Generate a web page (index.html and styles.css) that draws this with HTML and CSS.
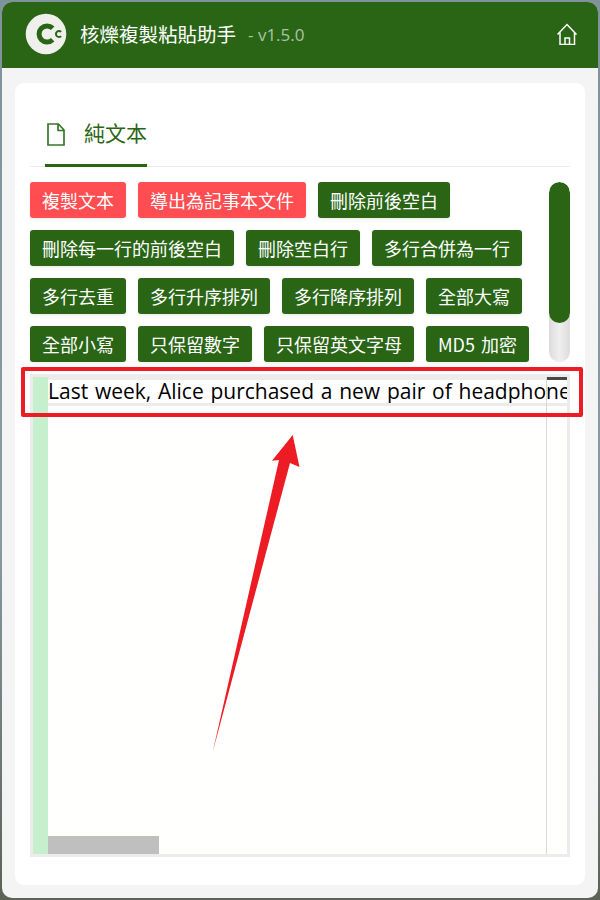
FILE: index.html
```html
<!DOCTYPE html>
<html lang="zh-Hant">
<head>
<meta charset="utf-8">
<title>核爍複製粘貼助手</title>
<link rel="stylesheet" href="styles.css">
</head>
<body>
<div class="window">
  <header class="header">
    <svg class="logo" viewBox="0 0 42 42" width="42" height="42" aria-hidden="true">
      <circle cx="21" cy="21" r="20.3" fill="#efefec"/>
      <path d="M27.7 15.3A8 8 0 1 0 27.7 26.7" fill="none" stroke="#2a6516" stroke-width="5"/>
      <path d="M36.1 18.9A3 3 0 1 0 36.1 23.1" fill="none" stroke="#2a6516" stroke-width="2"/>
    </svg>
    <span class="title">核爍複製粘貼助手</span>
    <span class="version">- v1.5.0</span>
    <svg class="home" viewBox="0 0 22 22" width="22" height="22" aria-hidden="true">
      <path d="M1.5 11.5 11 1.5l9.5 10M4 9.5v12h14.5v-12M9 21.5v-6.5h4.5v6.5" fill="none" stroke="#fff" stroke-width="1.5"/>
    </svg>
  </header>
  <main class="card">
    <div class="tabs">
      <div class="tab">
        <svg class="file" viewBox="0 0 18 23" width="18" height="23" aria-hidden="true">
          <path d="M1 1h10.5L17 7v15H1zM11 1v6.5h6" fill="none" stroke="#38762a" stroke-width="1.7"/>
        </svg>
        <span>純文本</span>
      </div>
    </div>
    <div class="tools">
      <div class="buttons">
        <button class="btn btn-red">複製文本</button>
        <button class="btn btn-red">導出為記事本文件</button>
        <button class="btn">刪除前後空白</button>
        <button class="btn">刪除每一行的前後空白</button>
        <button class="btn">刪除空白行</button>
        <button class="btn">多行合併為一行</button>
        <button class="btn">多行去重</button>
        <button class="btn">多行升序排列</button>
        <button class="btn">多行降序排列</button>
        <button class="btn">全部大寫</button>
        <button class="btn">全部小寫</button>
        <button class="btn">只保留數字</button>
        <button class="btn">只保留英文字母</button>
        <button class="btn">MD5 加密</button>
      </div>
      <div class="scrollbar"><div class="scroll-thumb"></div></div>
    </div>
    <div class="editor">
      <div class="gutter"></div>
      <div class="code">
        <div class="line">Last week, Alice purchased a new pair of headphone</div>
        <div class="hthumb"></div>
        <div class="minimap"><div class="minimap-mark"></div></div>
      </div>
    </div>
  </main>
</div>
<div class="red-frame"></div>
<svg class="arrow" viewBox="0 0 600 900" width="600" height="900" aria-hidden="true">
  <path d="M292.7 435 299.5 467 290 463 212.7 752 279 460 272 460.7Z" fill="#ed1c24"/>
</svg>
</body>
</html>
```
FILE: styles.css
```css
* { box-sizing: border-box; }
html, body { margin: 0; height: 100%; }
body {
  position: relative;
  width: 600px;
  height: 900px;
  overflow: hidden;
  padding: 2px;
  background: linear-gradient(#7f929d 0, #8a9aa3 60%, #5d6257 100%);
  font-family: "Noto Sans CJK TC", "Noto Sans", sans-serif;
}
.window {
  height: 896px;
  display: flex;
  flex-direction: column;
  background: #f4f4f4;
  border-radius: 10px;
  overflow: hidden;
}
.header {
  flex: none;
  height: 66px;
  display: flex;
  align-items: center;
  background: #2a6516;
  padding: 0 20px 2px 23px;
  color: #fff;
}
.logo { flex: none; }
.title { margin-left: 13px; font-size: 19.5px; line-height: 1; }
.version { margin-left: 12px; font-size: 17px; line-height: 1; color: #a9c4a6; font-family: "Open Sans", sans-serif; }
.home { margin-left: auto; }
.card {
  flex: 1;
  margin: 15px 13px 13px;
  background: #fff;
  border-radius: 9px;
  padding: 0 15px;
  display: flex;
  flex-direction: column;
}
.tabs {
  flex: none;
  height: 84px;
  display: flex;
  align-items: flex-end;
  border-bottom: 1px solid #ececec;
}
.tab {
  margin-left: 15px;
  height: 48px;
  width: 102px;
  display: flex;
  align-items: flex-start;
  gap: 19px;
  color: #2a6516;
  font-size: 21px;
  line-height: 26px;
  border-bottom: 3px solid #2a6516;
  margin-bottom: -1px;
  white-space: nowrap;
}
.file { flex: none; margin-top: 4px; margin-left: 2px; }
.tools {
  flex: none;
  margin-top: 15px;
  display: flex;
  justify-content: space-between;
  height: 180px;
}
.buttons {
  width: 510px;
  display: flex;
  flex-wrap: wrap;
  align-content: flex-start;
  gap: 12px;
}
.btn {
  height: 36px;
  padding: 0 12px;
  border: 0;
  border-radius: 3px;
  background: #2a6516;
  color: #fff;
  font-family: inherit;
  font-size: 18px;
  word-spacing: 2px;
  line-height: 36px;
  white-space: nowrap;
  box-shadow: 0 2px 3px rgba(0, 0, 0, .06);
}
.btn-red { background: #ff4d51; }
.scrollbar {
  width: 21px;
  height: 180px;
  border-radius: 11px;
  background: linear-gradient(90deg, #dcdcdc, #efefef 50%, #dcdcdc);
  overflow: hidden;
}
.scroll-thumb { height: 141px; background: #2a6516; border-radius: 11px; }
.editor {
  flex: none;
  margin-top: 12px;
  height: 483px;
  border: 3px solid #ececec;
  display: flex;
  background: #fffffd;
}
.gutter { flex: none; width: 15px; background: #c6efce; }
.code { position: relative; flex: 1; min-width: 0; overflow: hidden; }
.line {
  height: 29px;
  border-top: 3px solid #ececec;
  border-bottom: 3px solid #ececec;
  white-space: nowrap;
  overflow: hidden;
  font-family: "Open Sans", sans-serif;
  font-size: 21px;
  word-spacing: 1.3px;
  line-height: 22px;
  color: #000;
  background: #fff;
}
.hthumb { position: absolute; left: 0; bottom: 0; width: 111px; height: 18px; background: #bfbfbf; }
.minimap { position: absolute; right: 0; top: 0; bottom: 0; width: 21px; border-left: 1px solid #d9d9d9; }
.minimap-mark { height: 3px; background: #474747; }
.red-frame {
  position: absolute;
  left: 21px;
  top: 367px;
  width: 562px;
  height: 50px;
  border: 4px solid #ed1c24;
  border-radius: 2px;
}
.arrow { position: absolute; left: 0; top: 0; }
```
